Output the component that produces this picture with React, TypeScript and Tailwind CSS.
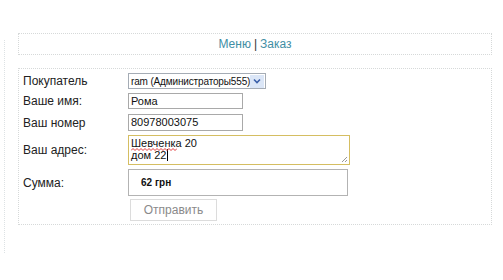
export default function App() {
    const label = "w-[105px] text-[12px] text-[#222]";
    return (
        <div className="flex h-[280px] w-[503px] bg-white font-['Liberation_Sans',Arial,sans-serif]">
            <div className="ml-[4px] mt-[40px] h-[213px] border-l border-dotted border-[#dde2e4]" />
            <div className="ml-[13px] flex w-[474px] flex-col pt-[33px]">
                <div className="flex h-[22px] items-center justify-center border border-dotted border-[#d6d9d9] text-[12px]">
                    <span className="text-[#3f8ea4]">Меню</span>
                    <span className="mx-[3px] text-[#333]">|</span>
                    <span className="text-[#3f8ea4]">Заказ</span>
                </div>

                <div className="mt-[13px] flex h-[157px] flex-col border border-dotted border-[#d6d9d9] pl-[4px] pt-[4px]">
                    <div className="flex h-[16px] items-center">
                        <div className={label}>Покупатель</div>
                        <div className="flex h-[16px] w-[138px] items-center border border-[#a5acb5] pl-[2px] text-[10px] tracking-[-0.15px] whitespace-nowrap text-[#111]">
                            <span className="flex-1">ram (Администраторы555)</span>
                            <span className="mr-[1px] flex h-[13px] w-[14px] shrink-0 items-center justify-center bg-[#dbe6f7]">
                                <svg width="8" height="6" viewBox="0 0 8 6">
                                    <path d="M1 1.5 L4 4.5 L7 1.5" fill="none" stroke="#3a5fa8" strokeWidth="1.6" />
                                </svg>
                            </span>
                        </div>
                    </div>

                    <div className="mt-[4px] flex h-[16px] items-center">
                        <div className={label}>Ваше имя:</div>
                        <div className="flex h-[16px] w-[115px] items-center border border-[#a9a9a9] pl-[2px] text-[11px] text-[#111]">
                            Рома
                        </div>
                    </div>

                    <div className="mt-[5px] flex h-[17px] items-center">
                        <div className={label}>Ваш номер</div>
                        <div className="flex h-[17px] w-[115px] items-center border border-[#a9a9a9] pl-[2px] text-[11px] text-[#111]">
                            80978003075
                        </div>
                    </div>

                    <div className="mt-[4px] flex h-[30px] items-center">
                        <div className={label}>Ваш адрес:</div>
                        <div className="relative h-[30px] w-[222px] border border-[#d5be62] pl-[2px] pt-px text-[11px] leading-[12px] text-[#111]">
                            <div>
                                <span className="relative">
                                    Шевченка
                                    <svg className="absolute left-0 top-[11px]" width="46" height="3" viewBox="0 0 46 3">
                                        <path
                                            d="M0 2.5 L2 0.5 L4 2.5 L6 0.5 L8 2.5 L10 0.5 L12 2.5 L14 0.5 L16 2.5 L18 0.5 L20 2.5 L22 0.5 L24 2.5 L26 0.5 L28 2.5 L30 0.5 L32 2.5 L34 0.5 L36 2.5 L38 0.5 L40 2.5 L42 0.5 L44 2.5 L46 0.5"
                                            fill="none"
                                            stroke="#e03a3a"
                                            strokeWidth="1"
                                        />
                                    </svg>
                                </span>{" "}
                                20
                            </div>
                            <div className="flex items-center">
                                дом 22<span className="ml-px inline-block h-[12px] w-px bg-black" />
                            </div>
                            <svg className="absolute bottom-[1px] right-[1px]" width="8" height="8" viewBox="0 0 8 8">
                                <path d="M7 2 L2 7 M7 5 L5 7" stroke="#999" strokeWidth="1" />
                            </svg>
                        </div>
                    </div>

                    <div className="mt-[4px] flex h-[27px] items-center">
                        <div className={label}>Сумма:</div>
                        <div className="flex h-[27px] w-[220px] items-center border border-[#b3b3b3] pl-[12px] text-[10px] font-bold text-[#111]">
                            62 грн
                        </div>
                    </div>

                    <div className="mt-[3px] flex">
                        <div className="w-[107px]" />
                        <div className="flex h-[22px] w-[87px] items-center justify-center border border-[#dcdcdc] text-[12px] text-[#8a8a8a]">
                            Отправить
                        </div>
                    </div>
                </div>
            </div>
        </div>
    );
}
